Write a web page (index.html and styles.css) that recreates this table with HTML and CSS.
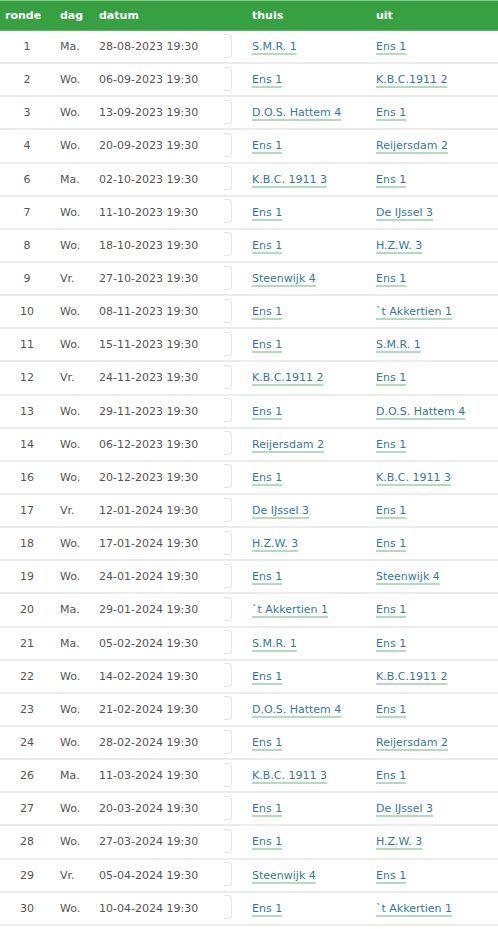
FILE: index.html
```html
<!DOCTYPE html>
<html>
<head>
<meta charset="utf-8">
<link rel="stylesheet" href="styles.css">
</head>
<body>
<div class="schedule">
  <div class="row head">
    <div class="c ronde-h">ronde</div>
    <div class="c">dag</div>
    <div class="c">datum</div>
    <div class="c"></div>
    <div class="c">thuis</div>
    <div class="c">uit</div>
  </div>
</div>
<script>
const data = [
["1","Ma.","28-08-2023 19:30","S.M.R. 1","Ens 1"],
["2","Wo.","06-09-2023 19:30","Ens 1","K.B.C.1911 2"],
["3","Wo.","13-09-2023 19:30","D.O.S. Hattem 4","Ens 1"],
["4","Wo.","20-09-2023 19:30","Ens 1","Reijersdam 2"],
["6","Ma.","02-10-2023 19:30","K.B.C. 1911 3","Ens 1"],
["7","Wo.","11-10-2023 19:30","Ens 1","De IJssel 3"],
["8","Wo.","18-10-2023 19:30","Ens 1","H.Z.W. 3"],
["9","Vr.","27-10-2023 19:30","Steenwijk 4","Ens 1"],
["10","Wo.","08-11-2023 19:30","Ens 1","`t Akkertien 1"],
["11","Wo.","15-11-2023 19:30","Ens 1","S.M.R. 1"],
["12","Vr.","24-11-2023 19:30","K.B.C.1911 2","Ens 1"],
["13","Wo.","29-11-2023 19:30","Ens 1","D.O.S. Hattem 4"],
["14","Wo.","06-12-2023 19:30","Reijersdam 2","Ens 1"],
["16","Wo.","20-12-2023 19:30","Ens 1","K.B.C. 1911 3"],
["17","Vr.","12-01-2024 19:30","De IJssel 3","Ens 1"],
["18","Wo.","17-01-2024 19:30","H.Z.W. 3","Ens 1"],
["19","Wo.","24-01-2024 19:30","Ens 1","Steenwijk 4"],
["20","Ma.","29-01-2024 19:30","`t Akkertien 1","Ens 1"],
["21","Ma.","05-02-2024 19:30","S.M.R. 1","Ens 1"],
["22","Wo.","14-02-2024 19:30","Ens 1","K.B.C.1911 2"],
["23","Wo.","21-02-2024 19:30","D.O.S. Hattem 4","Ens 1"],
["24","Wo.","28-02-2024 19:30","Ens 1","Reijersdam 2"],
["26","Ma.","11-03-2024 19:30","K.B.C. 1911 3","Ens 1"],
["27","Wo.","20-03-2024 19:30","Ens 1","De IJssel 3"],
["28","Wo.","27-03-2024 19:30","Ens 1","H.Z.W. 3"],
["29","Vr.","05-04-2024 19:30","Steenwijk 4","Ens 1"],
["30","Wo.","10-04-2024 19:30","Ens 1","`t Akkertien 1"]
];
const s = document.querySelector('.schedule');
for (const r of data) {
  const row = document.createElement('div');
  row.className = 'row';
  row.innerHTML =
    '<div class="c ronde">' + r[0] + '</div>' +
    '<div class="c">' + r[1] + '</div>' +
    '<div class="c">' + r[2] + '</div>' +
    '<div class="c"><span class="box"></span></div>' +
    '<div class="c"><a href="#" class="team">' + r[3] + '</a></div>' +
    '<div class="c"><a href="#" class="team">' + r[4] + '</a></div>';
  s.appendChild(row);
}
</script>
</body>
</html>
```
FILE: styles.css
```css
html, body {
  margin: 0;
  padding: 0;
  background: #fff;
}
body {
  font-family: "DejaVu Sans", Verdana, sans-serif;
  font-size: 11px;
  color: #555;
}
.schedule {
  width: 498px;
}
.row {
  display: grid;
  grid-template-columns: 54px 39px 125px 28px 124px 1fr;
  height: 31.15px;
  border-bottom: 2px solid #ececec;
  align-items: center;
}
.head {
  height: 29px;
  background: #36a043;
  border-top: 1px solid #86c98a;
  border-bottom: 1px solid #5db465;
  color: #fff;
  font-weight: bold;
}
.c {
  padding-left: 6px;
  white-space: nowrap;
}
.ronde-h {
  padding-left: 5px;
}
.ronde {
  padding-left: 0;
  text-align: center;
}
.box {
  display: block;
  width: 7px;
  height: 22px;
  border: 1px solid #e4e4e4;
  border-left: none;
  border-radius: 0 4px 4px 0;
  margin-top: -2px;
}
.team {
  color: #367a94;
  text-decoration: underline;
  text-decoration-color: #b4dcbb;
  text-decoration-thickness: 2px;
  text-underline-offset: 3px;
}
```
